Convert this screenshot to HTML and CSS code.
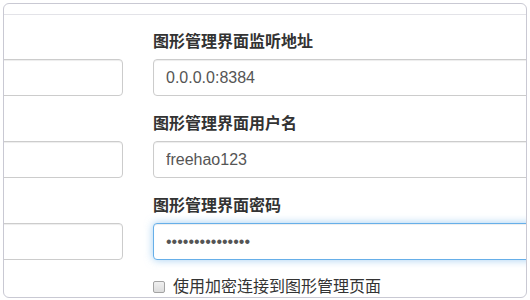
FILE: index.html
```html
<!DOCTYPE html>
<html lang="zh-CN">

<head>
   <meta charset="UTF-8">
   <meta name="viewport" content="width=device-width, initial-scale=1.0">
   <title>设置</title>
   <link rel="stylesheet" href="styles.css">
</head>

<body>
   <div class="modal">
      <div class="modal-header"></div>
      <div class="modal-body">
         <div class="row">
            <div class="col">
               <div class="form-group">
                  <label></label>
                  <input class="field" type="text" value="">
               </div>
               <div class="form-group">
                  <label></label>
                  <input class="field" type="text" value="">
               </div>
               <div class="form-group">
                  <label></label>
                  <input class="field" type="text" value="">
               </div>
            </div>
            <div class="col">
               <div class="form-group">
                  <label>图形管理界面监听地址</label>
                  <input class="field" type="text" value="0.0.0.0:8384">
               </div>
               <div class="form-group">
                  <label>图形管理界面用户名</label>
                  <input class="field" type="text" value="freehao123">
               </div>
               <div class="form-group">
                  <label>图形管理界面密码</label>
                  <input class="field focus" type="password" value="freehao123freeh">
               </div>
               <div class="check">
                  <input type="checkbox" class="box">
                  <span>使用加密连接到图形管理页面</span>
               </div>
            </div>
         </div>
      </div>
   </div>
</body>

</html>
```

FILE: styles.css
```css
* {
   margin: 0;
   padding: 0;
   box-sizing: border-box;
}

body {
   background: #fff;
   font-family: "Liberation Sans", "Noto Sans CJK SC", sans-serif;
   font-size: 16px;
   color: #333;
   padding: 3px;
}

.modal {
   height: 295px;
   border: 1px solid #c9c9d3;
   border-radius: 6px;
   overflow: hidden;
}

.modal-header {
   height: 11px;
   border-bottom: 1px solid #e3e3e8;
}

.modal-body {
   padding-top: 17px;
}

.row {
   display: grid;
   grid-template-columns: 390px 390px;
   column-gap: 30px;
   margin-left: -271px;
}

.form-group {
   margin-bottom: 18px;
}

.form-group label {
   display: block;
   height: 20px;
   font-weight: bold;
   line-height: 20px;
   margin-bottom: 7px;
   color: #333;
}

.field {
   display: block;
   width: 100%;
   height: 37px;
   padding: 0 12px;
   border: 1px solid #ccc;
   border-radius: 4px;
   font-family: "Liberation Sans", sans-serif;
   font-size: 16px;
   color: #555;
   background: #fff;
   box-shadow: inset 0 1px 1px rgba(0, 0, 0, 0.075);
   outline: none;
}

.focus {
   border-color: #66afe9;
   box-shadow: inset 0 1px 1px rgba(0, 0, 0, 0.075), 0 0 8px rgba(102, 175, 233, 0.6);
}

.check {
   display: flex;
   align-items: center;
   height: 18px;
   line-height: 18px;
}

.box {
   appearance: none;
   width: 12px;
   height: 12px;
   border: 1px solid #a3a3a3;
   border-radius: 2px;
   background: linear-gradient(#f0f0f0, #dcdcdc);
   margin-right: 8px;
}
```
